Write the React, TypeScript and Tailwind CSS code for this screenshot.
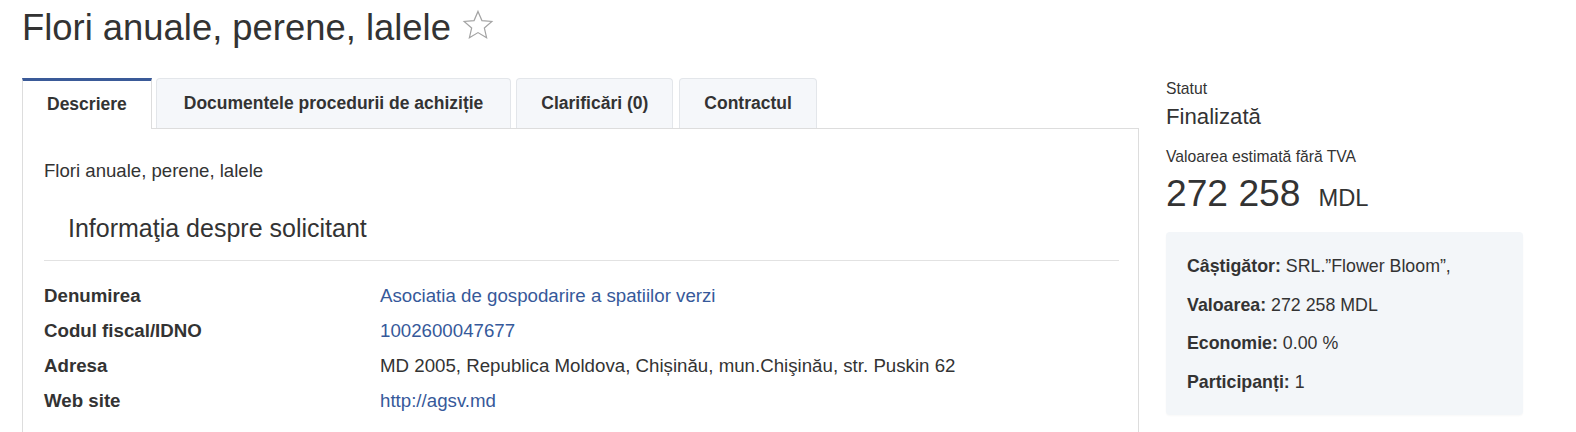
import React from "react";

const font = { fontFamily: '"Liberation Sans", Arial, Helvetica, sans-serif' };

function Star() {
  return (
    <svg width="32" height="32" viewBox="0 0 24 24" fill="none" stroke="#a3a3a3" strokeWidth="0.9" strokeLinejoin="miter">
      <path d="M12 1.8l2.95 6.9 7.45.65-5.65 4.9 1.7 7.3L12 17.7l-6.45 3.85 1.7-7.3-5.65-4.9 7.45-.65z" />
    </svg>
  );
}

const rows: { label: string; value: string; link?: boolean }[] = [
  { label: "Denumirea", value: "Asociatia de gospodarire a spatiilor verzi", link: true },
  { label: "Codul fiscal/IDNO", value: "1002600047677", link: true },
  { label: "Adresa", value: "MD 2005, Republica Moldova, Chișinău, mun.Chişinău, str. Puskin 62" },
  { label: "Web site", value: "http://agsv.md", link: true },
];

export default function App() {
  return (
    <div className="bg-white text-[#333] w-[1576px] h-[432px] overflow-hidden" style={font}>
      <div className="px-[22px] pt-[8px]">
        <div className="flex items-center h-[40px]">
          <h1 className="text-[36.4px] leading-[40px] font-normal text-[#333]">Flori anuale, perene, lalele</h1>
          <div className="ml-[11px] -mt-[6px]">
            <Star />
          </div>
        </div>
        <div className="flex mt-[30px] gap-[27px]">
          {/* Left column */}
          <div className="w-[1117px]">
            <div className="flex items-start h-[50px]">
              <div className="relative z-10 h-[51px] bg-white border-t-[3px] border-t-[#3a5a98] border-x border-x-[#dddddd] px-[24px] flex items-center justify-center text-[17.5px] font-bold pb-[2px]">
                Descriere
              </div>
              <div className="ml-[4px] h-[50px] bg-[#f5f7fa] border border-[#e3e6ea] border-b-0 rounded-t-[4px] px-[27px] flex items-center text-[17.5px] font-bold">
                Documentele procedurii de achiziție
              </div>
              <div className="ml-[5px] h-[50px] bg-[#f5f7fa] border border-[#e3e6ea] border-b-0 rounded-t-[4px] px-[24px] flex items-center text-[17.5px] font-bold">
                Clarificări (0)
              </div>
              <div className="ml-[6px] h-[50px] bg-[#f5f7fa] border border-[#e3e6ea] border-b-0 rounded-t-[4px] px-[24px] flex items-center text-[17.5px] font-bold">
                Contractul
              </div>
            </div>
            <div className="border border-[#dddddd] pl-[21px] pr-[19px] pt-[29px] pb-[40px]">
              <div className="text-[18.6px] leading-[26px]">Flori anuale, perene, lalele</div>
              <div className="mt-[29px] ml-[24px] text-[25px] leading-[30px]">Informaţia despre solicitant</div>
              <div className="mt-[17px] border-t border-[#e2e2e2]" />
              <div className="mt-[17px]">
                {rows.map((r) => (
                  <div key={r.label} className="flex text-[18.7px] leading-[35px]">
                    <div className="w-[336px] font-bold">{r.label}</div>
                    <div className={r.link ? "text-[#36599a]" : "text-[#333]"}>{r.value}</div>
                  </div>
                ))}
              </div>
            </div>
          </div>
          {/* Right column */}
          <div className="w-[357px] pt-[1px]">
            <div className="text-[15.7px] leading-[20px]">Statut</div>
            <div className="mt-[4px] text-[22.2px] leading-[28px]">Finalizată</div>
            <div className="mt-[16px] text-[15.7px] leading-[20px]">Valoarea estimată fără TVA</div>
            <div className="mt-[5px] flex items-baseline h-[42px]">
              <span className="text-[37.2px] leading-[42px]">272 258</span>
              <span className="ml-[18px] text-[23.7px]">MDL</span>
            </div>
            <div className="mt-[18px] bg-[#f3f6f9] rounded-[4px] shadow-[0_1px_2px_rgba(0,0,0,0.03)] pl-[21px] pt-[15px] pb-[14px] text-[17.8px] leading-[38.5px]">
              <div><span className="font-bold">Câștigător:</span> SRL.”Flower Bloom”,</div>
              <div><span className="font-bold">Valoarea:</span> 272 258 MDL</div>
              <div><span className="font-bold">Economie:</span> 0.00 %</div>
              <div><span className="font-bold">Participanți:</span> 1</div>
            </div>
          </div>
        </div>
      </div>
    </div>
  );
}
